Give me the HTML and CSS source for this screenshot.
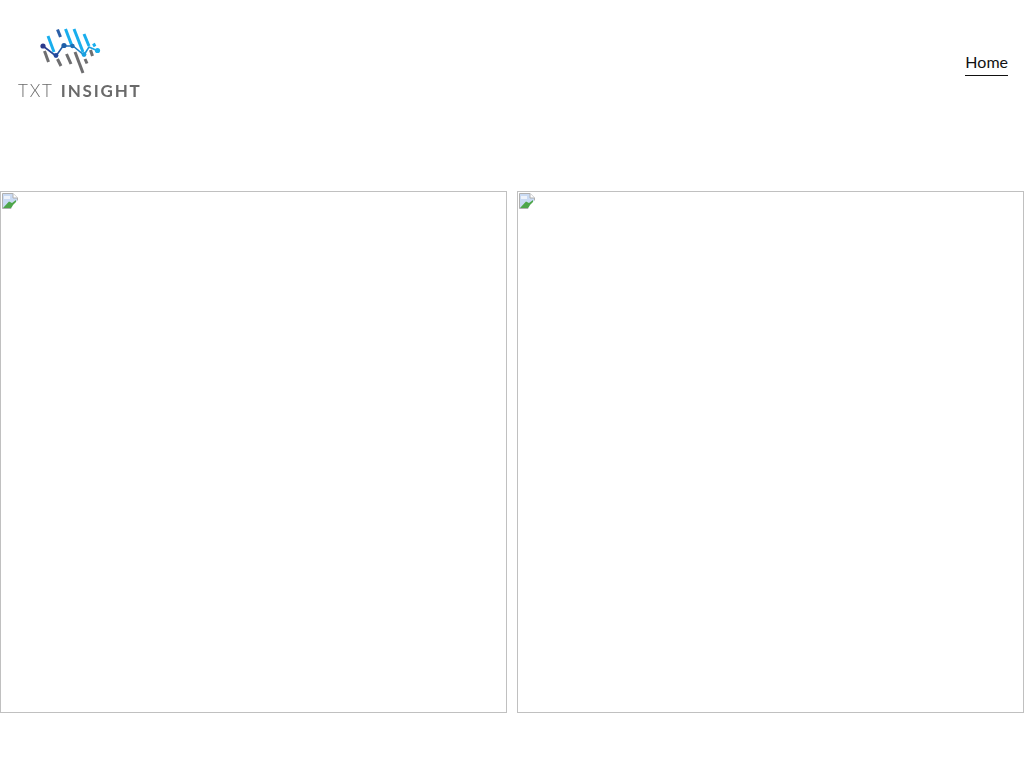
FILE: index.html
```html
<!DOCTYPE html>
<html lang="en">
<head>
    <meta charset="UTF-8">
    <meta name="viewport" content="width=device-width, initial-scale=1.0">
    <title>TXT Insight</title>
    <link rel="stylesheet" href="styles.css">
</head>
<body>

    <header class="site-header">
        <a class="logo" href="#">
            <svg class="logo-mark" width="122" height="50" viewBox="18 28 122 50" aria-hidden="true">
                <defs>
                    <linearGradient id="trend" gradientUnits="userSpaceOnUse" x1="43" y1="0" x2="98" y2="0">
                        <stop offset="0" stop-color="#2b3a8c"/>
                        <stop offset="0.5" stop-color="#1f6fb5"/>
                        <stop offset="1" stop-color="#19b0ee"/>
                    </linearGradient>
                </defs>
                <g class="bars-grey">
                    <path d="M44.5 51L48.5 62"/>
                    <path d="M57.5 59L61 66"/>
                    <path d="M66.5 54L71 64"/>
                    <path d="M75 52L83 73"/>
                    <path d="M85 59L87 63.5"/>
                    <path d="M90.5 50L92.5 56"/>
                </g>
                <g class="bars-blue">
                    <path class="dark" d="M57.5 29.5L60.5 37"/>
                    <path d="M48 36L54 52"/>
                    <path d="M65.5 29L72 46"/>
                    <path d="M74 29L83 52"/>
                    <path d="M84 34L89 46"/>
                    <path d="M93.5 43.5L95 46.5"/>
                </g>
                <path class="trend" d="M43 46L56 56L63 46L73 46L84 55L89 47L98 51"/>
                <circle cx="43" cy="46" r="2.6" fill="#2b3a8c"/>
                <circle cx="56" cy="55.5" r="2.4" fill="#24489c"/>
                <circle cx="64" cy="45.5" r="2.6" fill="#1f5fa8"/>
                <circle cx="72.5" cy="46" r="2.2" fill="#1f6fb5"/>
                <circle cx="84" cy="54.5" r="2.4" fill="#19a0e0"/>
                <circle cx="97.5" cy="50.5" r="2.6" fill="#19b0ee"/>
            </svg>
            <span class="logo-text"><span class="thin">TXT</span> <b>INSIGHT</b></span>
        </a>
        <nav class="main-nav">
            <a class="active" href="#">Home</a>
        </nav>
    </header>

    <main class="photo-row">
        <div class="photo">
            <svg class="broken-icon" width="16" height="16" viewBox="0 0 16 16" aria-hidden="true">
                <path d="M0.5 0.5H11L15.5 5V15.5H0.5Z" fill="#c9daf3" stroke="#b0b0b0"/>
                <path d="M11 0.5V5H15.5" fill="#fff" stroke="#b0b0b0"/>
                <path d="M1 15L7 8.500L10 10L14 7V10L9 15Z" fill="#4ea64a"/>
                <path d="M2 3H8V6H2Z" fill="#eef3fb"/>
                <path d="M11 12L16 7V16H9Z" fill="#fff"/>
            </svg>
        </div>
        <div class="photo">
            <svg class="broken-icon" width="16" height="16" viewBox="0 0 16 16" aria-hidden="true">
                <path d="M0.5 0.5H11L15.5 5V15.5H0.5Z" fill="#c9daf3" stroke="#b0b0b0"/>
                <path d="M11 0.5V5H15.5" fill="#fff" stroke="#b0b0b0"/>
                <path d="M1 15L7 8.500L10 10L14 7V10L9 15Z" fill="#4ea64a"/>
                <path d="M2 3H8V6H2Z" fill="#eef3fb"/>
                <path d="M11 12L16 7V16H9Z" fill="#fff"/>
            </svg>
        </div>
    </main>

</body>
</html>
```

FILE: styles.css
```css
body {
    font-family: 'Lato', sans-serif;
    background-color: #fff;
    color: #111;
    margin: 0;
}

.site-header {
    display: flex;
    justify-content: space-between;
    align-items: flex-start;
    height: 191px;
    box-sizing: border-box;
    padding: 28px 16px 0 18px;
}

.logo {
    display: flex;
    flex-direction: column;
    gap: 3px;
    text-decoration: none;
    color: #6a6a6a;
}

.logo-mark {
    display: block;
}

.bars-grey path,
.bars-blue path {
    fill: none;
    stroke-width: 3;
    stroke-linecap: butt;
}

.bars-grey path {
    stroke: #6e6e70;
}

.bars-blue path {
    stroke: #19aeed;
}

.bars-blue .dark {
    stroke: #2a5fa8;
}

.trend {
    fill: none;
    stroke: url(#trend);
    stroke-width: 1.6;
}

.logo-text {
    font-size: 17px;
    line-height: 20px;
    letter-spacing: 1.8px;
    white-space: nowrap;
    will-change: transform;
}

.logo-text .thin {
    font-weight: 300;
}

.logo-text b {
    font-weight: 700;
    margin-left: 1px;
}

.main-nav {
    margin-top: 22px;
}

.main-nav a {
    display: block;
    font-size: 16px;
    line-height: 24px;
    color: #111;
    text-decoration: none;
    border-bottom: 1px solid #111;
    padding-bottom: 1px;
}

.photo-row {
    display: flex;
    gap: 10px;
}

.photo {
    flex: 1;
    height: 522px;
    box-sizing: border-box;
    border: 1px solid #c0c0c0;
    padding: 1px;
}

.broken-icon {
    display: block;
}
```
